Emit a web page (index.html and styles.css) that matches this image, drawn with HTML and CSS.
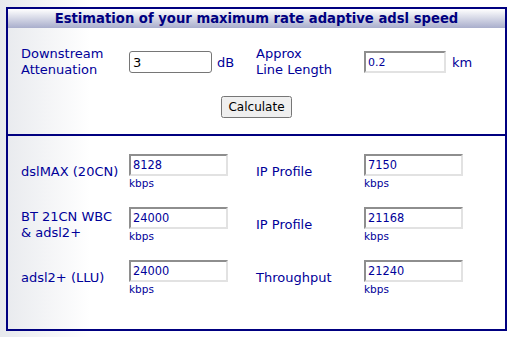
FILE: index.html
```html
<!DOCTYPE html>
<html lang="en">
<head>
    <meta charset="UTF-8">
    <meta name="viewport" content="width=device-width, initial-scale=1.0">
    <title>ADSL Speed Estimator</title>
    <link rel="stylesheet" href="styles.css">
</head>
<body>
    <div class="calc">
        <div class="calc-title">Estimation of your maximum rate adaptive adsl speed</div>

        <div class="calc-inputs">
            <div class="input-row">
                <label class="field-label" for="atten">Downstream<br>Attenuation</label>
                <input type="text" id="atten" class="plain" value="3">
                <span class="unit">dB</span>
                <label class="field-label" for="length">Approx<br>Line Length</label>
                <input type="text" id="length" class="sunken short" value="0.2">
                <span class="unit unit-km">km</span>
            </div>
            <div class="actions">
                <button type="button">Calculate</button>
            </div>
        </div>

        <div class="calc-results">
            <div class="result-grid">
                <div class="field-label">dslMAX (20CN)</div>
                <div class="result">
                    <input type="text" class="sunken" value="8128">
                    <span class="kbps">kbps</span>
                </div>
                <div class="field-label">IP Profile</div>
                <div class="result">
                    <input type="text" class="sunken" value="7150">
                    <span class="kbps">kbps</span>
                </div>

                <div class="field-label">BT 21CN WBC<br>&amp; adsl2+</div>
                <div class="result">
                    <input type="text" class="sunken" value="24000">
                    <span class="kbps">kbps</span>
                </div>
                <div class="field-label">IP Profile</div>
                <div class="result">
                    <input type="text" class="sunken" value="21168">
                    <span class="kbps">kbps</span>
                </div>

                <div class="field-label">adsl2+ (LLU)</div>
                <div class="result">
                    <input type="text" class="sunken" value="24000">
                    <span class="kbps">kbps</span>
                </div>
                <div class="field-label">Throughput</div>
                <div class="result">
                    <input type="text" class="sunken" value="21240">
                    <span class="kbps">kbps</span>
                </div>
            </div>
        </div>
    </div>
</body>
</html>
```

FILE: styles.css
```css
body {
    margin: 0;
    padding: 7px 6px 0;
    font-family: "DejaVu Sans", Verdana, sans-serif;
    background: linear-gradient(to right, #e7e9ed, #ffffff 90px);
    color: #000099;
}
.calc {
    border: 2px solid #000080;
}
.calc-title {
    height: 19px;
    line-height: 19px;
    text-align: center;
    font-size: 13.2px;
    font-weight: bold;
    color: #000080;
    background: linear-gradient(to bottom, #ffffff, #a9aecc);
}
.calc-inputs {
    padding: 18px 13px 16px;
}
.input-row {
    display: grid;
    grid-template-columns: 108px 83px 44px 108px 82px auto;
    align-items: center;
}
.field-label {
    font-size: 13px;
    line-height: 16px;
}
.unit {
    font-size: 13px;
    padding-left: 5px;
}
.unit-km {
    padding-left: 6px;
}
input {
    box-sizing: border-box;
    height: 22px;
    margin: 0;
    font-family: "DejaVu Sans", Verdana, sans-serif;
}
input.plain {
    width: 83px;
    border: 1px solid #767676;
    border-radius: 3px;
    padding: 1px 3px;
    font-size: 13px;
    color: #000;
    background: #fff;
}
input.sunken {
    width: 99px;
    border: 2px solid;
    border-color: #8e8e8e #e2e2e2 #e2e2e2 #8e8e8e;
    padding: 0 2px 1px;
    font-size: 11.4px;
    color: #000099;
    background: #fff;
}
input.sunken.short {
    width: 82px;
    padding: 1px 2px 0;
    font-size: 11px;
}
.actions {
    margin-top: 18px;
    text-align: center;
}
button {
    height: 22px;
    padding: 1px 5px;
    font-family: "DejaVu Sans", Verdana, sans-serif;
    font-size: 12px;
    color: #000;
}
.calc-results {
    border-top: 2px solid #000080;
    padding: 18px 13px 33px;
}
.result-grid {
    display: grid;
    grid-template-columns: 108px 127px 108px auto;
    row-gap: 17px;
    align-items: center;
}
.result {
    display: flex;
    flex-direction: column;
    align-items: flex-start;
}
.kbps {
    font-size: 10.5px;
    line-height: 14px;
}
```
